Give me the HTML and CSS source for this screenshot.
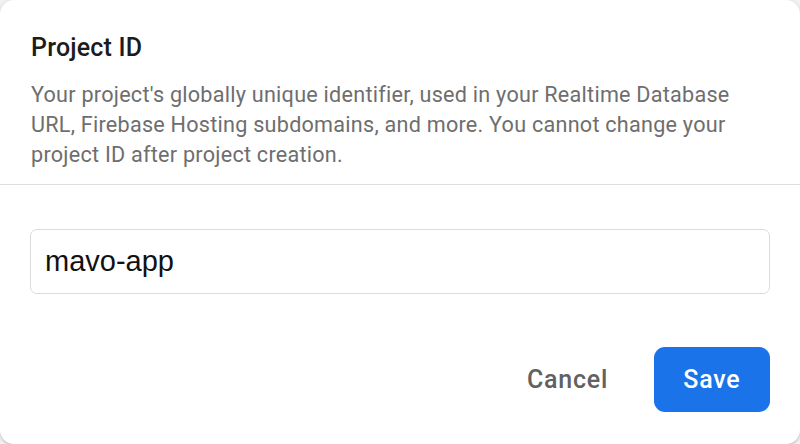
FILE: index.html
```html
<!DOCTYPE html>
<html lang="en">
<head>
<meta charset="utf-8">
<title>Project ID</title>
<link rel="stylesheet" href="styles.css">
</head>
<body>
<div class="dialog">
  <header class="dialog-head">
    <h2 class="title">Project ID</h2>
    <p class="desc">Your project's globally unique identifier, used in your Realtime Database URL, Firebase Hosting subdomains, and more. You cannot change your project ID after project creation.</p>
  </header>
  <div class="dialog-body">
    <input class="field" type="text" value="mavo-app">
  </div>
  <footer class="dialog-actions">
    <button class="btn btn-text" type="button">Cancel</button>
    <button class="btn btn-primary" type="button">Save</button>
  </footer>
</div>
</body>
</html>
```

FILE: styles.css
```css
* { box-sizing: border-box; }
html, body { margin: 0; padding: 0; }
body {
  width: 800px;
  height: 444px;
  background: #f1f1f1;
  font-family: Roboto, "Liberation Sans", sans-serif;
  overflow: hidden;
}
.dialog {
  width: 800px;
  height: 444px;
  background: #fff;
  border-radius: 14px;
  box-shadow: 0 1px 3px rgba(0,0,0,0.25);
  display: flex;
  flex-direction: column;
}
.dialog-head {
  padding: 32px 31px 14px;
  border-bottom: 1px solid #dedede;
}
.title {
  margin: 0;
  font-size: 25px;
  line-height: 32px;
  font-weight: 500;
  letter-spacing: 0.2px;
  color: #1c1c1c;
}
.desc {
  margin: 16px 0 0;
  font-size: 21.6px;
  line-height: 30px;
  letter-spacing: 0.25px;
  color: #6e6e6e;
}
.dialog-body {
  padding: 44px 30px 0;
}
.field {
  display: block;
  width: 100%;
  height: 65px;
  border: 1.5px solid #dcdcdc;
  border-radius: 7px;
  padding: 0 14px;
  font-family: "Liberation Sans", Arial, sans-serif;
  font-size: 29px;
  color: #111;
  background: #fff;
  outline: none;
}
.dialog-actions {
  display: flex;
  justify-content: flex-end;
  gap: 16px;
  padding: 53px 30px 0;
}
.btn {
  height: 65px;
  padding: 0 29.5px;
  border: none;
  border-radius: 11px;
  font-family: Roboto, "Liberation Sans", sans-serif;
  font-size: 25px;
  font-weight: 500;
  letter-spacing: 0.8px;
  background: transparent;
  cursor: pointer;
}
.btn-text { color: #616161; }
.btn-primary {
  background: #1a73e8;
  color: #fff;
}
```
